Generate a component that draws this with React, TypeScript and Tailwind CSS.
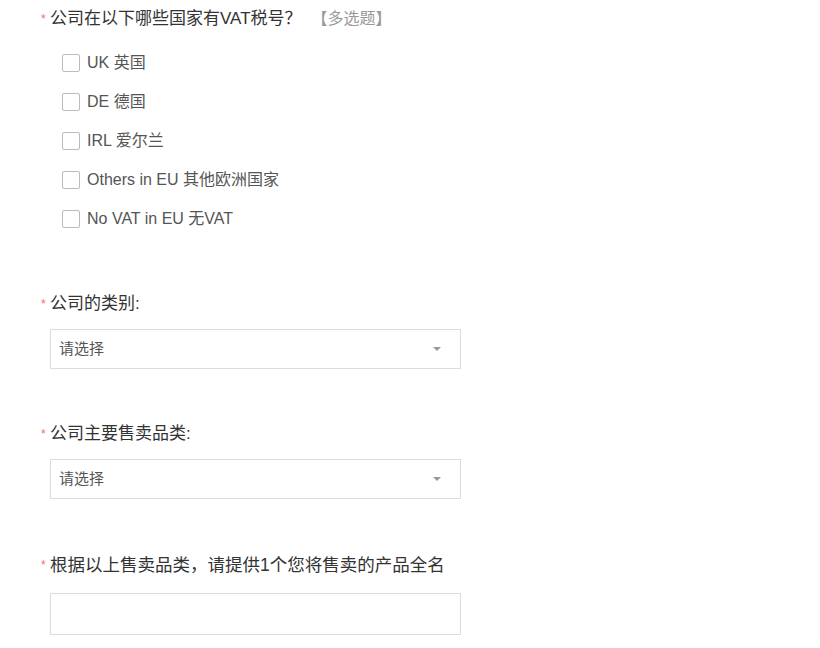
import React from "react";

const font = { fontFamily: '"Liberation Sans", "Noto Sans CJK SC", sans-serif' };

function Label({ text, extra, size }: { text: string; extra?: string; size: string }) {
  return (
    <div className="relative h-[24px] flex items-center pl-[12px]">
      <span className="absolute left-[3px] top-[6px] text-[12px] leading-[12px] text-[#f56c6c]">*</span>
      <span className={`${size} text-[#333] whitespace-nowrap`}>{text}</span>
      {extra && <span className="text-[16px] text-[#999] ml-[10px] whitespace-nowrap">{extra}</span>}
    </div>
  );
}

function Select() {
  return (
    <div className="ml-[12px] w-[411px] h-[40px] border border-[#dcdcdc] bg-white flex items-center justify-between pl-[8px] pr-[19px]">
      <span className="text-[15px] text-[#555]">请选择</span>
      <svg width="8" height="4" viewBox="0 0 8 4"><path d="M0 0 L8 0 L4 4 Z" fill="#999" /></svg>
    </div>
  );
}

export default function App() {
  const opts = ["UK 英国", "DE 德国", "IRL 爱尔兰", "Others in EU 其他欧洲国家", "No VAT in EU 无VAT"];
  return (
    <div className="w-[820px] h-[648px] bg-white pl-[38px] pt-[7px] overflow-hidden" style={font}>
      <Label text="公司在以下哪些国家有VAT税号？" extra="【多选题】" size="text-[17px]" />
      <div className="mt-[12px] pl-[24px] flex flex-col">
        {opts.map((o) => (
          <label key={o} className="h-[39px] flex items-center">
            <span className="w-[18px] h-[18px] border border-[#bbb] rounded-[2px] bg-white" />
            <span className="ml-[7px] text-[16px] text-[#555]">{o}</span>
          </label>
        ))}
      </div>
      <div className="mt-[54px]">
        <Label text="公司的类别:" size="text-[17px]" />
      </div>
      <div className="mt-[13px]">
        <Select />
      </div>
      <div className="mt-[53px]">
        <Label text="公司主要售卖品类:" size="text-[17px]" />
      </div>
      <div className="mt-[13px]">
        <Select />
      </div>
      <div className="mt-[54px]">
        <Label text="根据以上售卖品类，请提供1个您将售卖的产品全名" size="text-[17.5px]" />
      </div>
      <div className="mt-[16px] ml-[12px] w-[411px] h-[42px] border border-[#dcdcdc] bg-white" />
    </div>
  );
}
